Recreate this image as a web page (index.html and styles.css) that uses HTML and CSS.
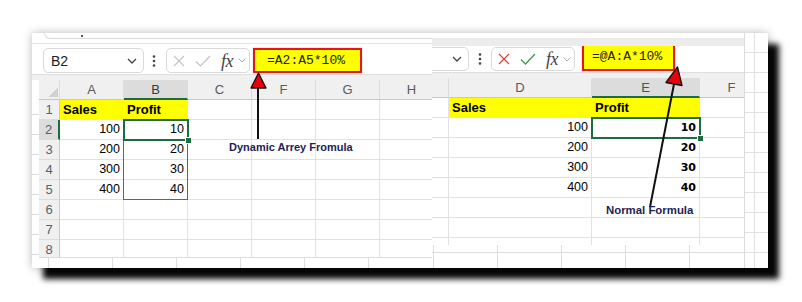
FILE: index.html
```html
<!DOCTYPE html>
<html>
<head>
    <meta charset="utf-8">
    <title>Dynamic Array vs Normal Formula</title>
    <link rel="stylesheet" href="styles.css">
</head>
<body>
    <div class="shot">
        <!-- left screenshot: spilled dynamic array -->
        <section class="pane pane-left">
            <div class="ribbon"><span class="ribbon-box"></span><span class="ribbon-dot"></span></div>
            <div class="fbar">
                <div class="namebox">
                    <span>B2</span>
                    <svg width="10" height="6" viewBox="0 0 10 6"><polyline points="1,1 5,5 9,1" fill="none" stroke="#444" stroke-width="1.3"/></svg>
                </div>
                <svg class="dots" width="4" height="12" viewBox="0 0 4 12"><circle cx="2" cy="1.5" r="1.3"/><circle cx="2" cy="6" r="1.3"/><circle cx="2" cy="10.5" r="1.3"/></svg>
                <div class="fxgroup">
                    <svg width="12" height="12" viewBox="0 0 12 12"><path d="M1 1L11 11M11 1L1 11" stroke="#c4c4c4" stroke-width="1.2"/></svg>
                    <svg width="16" height="12" viewBox="0 0 16 12"><path d="M1 6.5L5.5 11L15 1" fill="none" stroke="#c4c4c4" stroke-width="1.2"/></svg>
                    <span class="fx">fx</span>
                    <svg width="8" height="5" viewBox="0 0 8 5"><polyline points="0.5,0.5 4,4 7.5,0.5" fill="none" stroke="#aaa" stroke-width="1"/></svg>
                </div>
                <div class="formula formula-left">=A2:A5*10%</div>
            </div>
            <div class="body">
                <div class="gutter"></div>
                <div class="sheet sheet-left">
                    <div class="h corner"></div><div class="h">A</div><div class="h h-sel">B</div><div class="h">C</div><div class="h">F</div><div class="h">G</div><div class="h">H</div>

                    <div class="r">1</div><div class="c y b y-join">Sales</div><div class="c y b">Profit</div><div class="c"></div><div class="c"></div><div class="c"></div><div class="c"></div>
                    <div class="r r-sel">2</div><div class="c n">100</div><div class="c n">10</div><div class="c"></div><div class="c"></div><div class="c"></div><div class="c"></div>
                    <div class="r">3</div><div class="c n">200</div><div class="c n">20</div><div class="c"></div><div class="c"></div><div class="c"></div><div class="c"></div>
                    <div class="r">4</div><div class="c n">300</div><div class="c n">30</div><div class="c"></div><div class="c"></div><div class="c"></div><div class="c"></div>
                    <div class="r">5</div><div class="c n">400</div><div class="c n">40</div><div class="c"></div><div class="c"></div><div class="c"></div><div class="c"></div>
                    <div class="r">6</div><div class="c"></div><div class="c"></div><div class="c"></div><div class="c"></div><div class="c"></div><div class="c"></div>
                    <div class="r">7</div><div class="c"></div><div class="c"></div><div class="c"></div><div class="c"></div><div class="c"></div><div class="c"></div>
                    <div class="r r-last">8</div><div class="c"></div><div class="c"></div><div class="c"></div><div class="c"></div><div class="c"></div><div class="c"></div>

                    <div class="spill"></div>
                    <div class="active"><span class="handle"></span></div>
                </div>
            </div>
            <div class="tabs tabs-left"></div>
        </section>

        <!-- right screenshot: implicit intersection -->
        <section class="pane pane-right">
            <div class="ribbon ribbon-right"></div>
            <div class="fbar fbar-right">
                <div class="namebox namebox-cut">
                    <span></span>
                    <svg width="10" height="6" viewBox="0 0 10 6"><polyline points="1,1 5,5 9,1" fill="none" stroke="#444" stroke-width="1.3"/></svg>
                </div>
                <svg class="dots" width="4" height="12" viewBox="0 0 4 12"><circle cx="2" cy="1.5" r="1.3"/><circle cx="2" cy="6" r="1.3"/><circle cx="2" cy="10.5" r="1.3"/></svg>
                <div class="fxgroup">
                    <svg width="12" height="12" viewBox="0 0 12 12"><path d="M1 1L11 11M11 1L1 11" stroke="#e0463c" stroke-width="1.3"/></svg>
                    <svg width="16" height="12" viewBox="0 0 16 12"><path d="M1 6.5L5.5 11L15 1" fill="none" stroke="#3a9d4f" stroke-width="1.3"/></svg>
                    <span class="fx">fx</span>
                    <svg width="8" height="5" viewBox="0 0 8 5"><polyline points="0.5,0.5 4,4 7.5,0.5" fill="none" stroke="#aaa" stroke-width="1"/></svg>
                </div>
                <div class="formula formula-right">=@A:A*10%</div>
            </div>
            <div class="body body-right">
                <div class="sheet sheet-right">
                    <div class="h"></div><div class="h">D</div><div class="h h-sel">E</div><div class="h">F</div>

                    <div class="c"></div><div class="c y b y-join">Sales</div><div class="c y b">Profit</div><div class="c"></div>
                    <div class="c"></div><div class="c n">100</div><div class="c n nb">10</div><div class="c"></div>
                    <div class="c"></div><div class="c n">200</div><div class="c n nb">20</div><div class="c"></div>
                    <div class="c"></div><div class="c n">300</div><div class="c n nb">30</div><div class="c"></div>
                    <div class="c"></div><div class="c n">400</div><div class="c n nb">40</div><div class="c"></div>
                    <div class="c"></div><div class="c"></div><div class="c"></div><div class="c"></div>
                    <div class="c"></div><div class="c"></div><div class="c"></div><div class="c"></div>
                    <div class="c c-cut"></div><div class="c c-cut"></div><div class="c c-cut"></div><div class="c c-cut"></div>

                    <div class="active"><span class="handle"></span></div>
                </div>
            </div>
            <div class="tabs tabs-right"></div>
        </section>

        <div class="edge"></div>
    </div>

    <!-- annotation arrows -->
    <svg class="arrows" width="802" height="302" viewBox="0 0 802 302">
        <line x1="258" y1="87" x2="258" y2="139" stroke="#111" stroke-width="2"/>
        <polygon points="258.5,73 251,88 266,88" fill="#e8000b" stroke="#111" stroke-width="1.3" stroke-linejoin="round"/>
        <line x1="650" y1="207" x2="674" y2="84" stroke="#111" stroke-width="2"/>
        <polygon points="677.5,67 666,82.5 682,85.5" fill="#e8000b" stroke="#111" stroke-width="1.3" stroke-linejoin="round"/>
    </svg>
    <div class="note note-left">Dynamic Arrey Fromula</div>
    <div class="note note-right">Normal Formula</div>
</body>
</html>
```

FILE: styles.css
```css
* {
    box-sizing: border-box;
}

body {
    margin: 0;
    width: 802px;
    height: 302px;
    position: relative;
    overflow: hidden;
    background: #fff;
    font-family: "Liberation Sans", Arial, sans-serif;
    color: #000;
}

.shot {
    display: flex;
    width: 736px;
    height: 235px;
    margin: 33px 0 0 32px;
    background: #fff;
    overflow: hidden;
    box-shadow: 11px 11px 6px rgba(0, 0, 0, 0.98), 0 0 9px rgba(0, 0, 0, 0.28);
}

.pane {
    flex: none;
    display: flex;
    flex-direction: column;
    overflow: hidden;
}

.pane-left {
    width: 400px;
}

.pane-right {
    width: 312px;
}

/* ribbon remnants at the top */
.ribbon {
    height: 11px;
    border-bottom: 1px solid #e4e4e4;
    position: relative;
    flex: none;
}

.ribbon-box {
    display: block;
    margin-left: 12px;
    width: 400px;
    height: 6px;
    border: 1px solid #d8d8d8;
    border-top: none;
    border-radius: 0 0 6px 6px;
}

.ribbon-dot {
    position: absolute;
    left: 49px;
    top: 2px;
    width: 2px;
    height: 2px;
    background: #555;
}

.ribbon-right {
    height: 13px;
    border-bottom: none;
    background:
        linear-gradient(#fff 0 5px, #ececec 5px 13px),
        #fff;
}

/* formula bar */
.fbar {
    height: 31px;
    flex: none;
    display: flex;
    align-items: flex-start;
    padding: 4px 0 0 11px;
    background: #fff;
    border-bottom: 1px solid #dedede;
}

.fbar-right {
    height: 27px;
    padding: 1px 0 0 0;
    border-bottom: 1px solid #dedede;
}

.namebox {
    flex: none;
    width: 101px;
    height: 25px;
    display: flex;
    align-items: center;
    justify-content: space-between;
    padding: 0 6px 0 7px;
    border: 1px solid #d9d9d9;
    border-radius: 5px;
    background: #fff;
    font-size: 14px;
    color: #222;
}

.namebox-cut {
    margin-left: -64px;
    height: 24px;
}

.dots {
    flex: none;
    margin: 7px 0 0 8px;
    fill: #444;
}

.fbar-right .dots {
    margin: 6px 0 0 9px;
}

.fxgroup {
    flex: none;
    width: 84px;
    height: 25px;
    margin-left: 10px;
    display: flex;
    align-items: center;
    padding-left: 6px;
    border: 1px solid #d9d9d9;
    border-radius: 5px;
    background: #fff;
}

.fbar-right .fxgroup {
    margin-left: 9px;
    height: 24px;
}

.fxgroup svg:nth-child(2) {
    margin-left: 10px;
}

.fx {
    margin-left: 10px;
    font-family: "Liberation Serif", "Times New Roman", serif;
    font-style: italic;
    font-size: 18px;
    line-height: 18px;
    color: #444;
    letter-spacing: -0.5px;
}

.fxgroup svg:last-child {
    margin-left: 5px;
}

.formula {
    flex: none;
    height: 25px;
    margin-left: 3px;
    background: #ffff00;
    border: 2px solid #e8141b;
    font-family: "Liberation Mono", "Courier New", monospace;
    font-size: 13px;
    line-height: 21px;
    color: #222;
    padding-left: 12px;
    box-shadow: 0 0 1px rgba(0, 0, 0, 0.4);
}

.formula-left {
    width: 109px;
}

.formula-right {
    width: 93px;
    height: 29px;
    margin: -5px 0 0 7px;
    line-height: 25px;
    padding-left: 8px;
}

/* sheet */
.body {
    flex: none;
    display: flex;
    height: 183px;
    border-top: 5px solid #f0f0f0;
    overflow: hidden;
}

.body-right {
    height: 172px;
}

.gutter {
    flex: none;
    width: 7px;
    background:
        repeating-linear-gradient(to bottom, transparent 0 14px, #dcdcdc 14px 15px, transparent 15px 20px);
    border-top: 20px solid #fff;
}

.sheet {
    position: relative;
    display: grid;
    flex: none;
}

.sheet-left {
    grid-template-columns: 21px repeat(6, 64px);
    grid-template-rows: repeat(8, 20px) 18px;
}

.sheet-right {
    grid-template-columns: 17px 143px 108px 64px;
    grid-template-rows: repeat(8, 20px) 7px;
}

.h {
    background: #f0f0f0;
    border-right: 1px solid #dcdcdc;
    border-bottom: 1px solid #c8c8c8;
    font-size: 13px;
    line-height: 19px;
    text-align: center;
    color: #5a5a5a;
}

.h-sel {
    background: #dcdcdc;
    border-bottom: 2px solid #1d6b40;
    color: #1d6b40;
}

.sheet-left .h-sel {
    color: #3a3a3a;
}

.corner {
    background:
        linear-gradient(135deg, transparent 58%, #d0d0d0 58%) 8px 6px / 11px 11px no-repeat,
        #f0f0f0;
}

.r {
    background: #f0f0f0;
    border-right: 1px solid #c8c8c8;
    border-bottom: 1px solid #dcdcdc;
    font-size: 13px;
    line-height: 19px;
    text-align: center;
    color: #556270;
}

.r-sel {
    background: #dcdcdc;
    border-right: 2px solid #1d6b40;
}

.c {
    border-right: 1px solid #e1e1e1;
    border-bottom: 1px solid #e1e1e1;
    font-size: 12.5px;
    line-height: 19px;
    padding: 0 3px;
    white-space: nowrap;
    overflow: hidden;
}

.c-cut {
    border-bottom: none;
}

.y {
    background: #ffff00;
}

.y-join {
    border-right-color: #ffff00;
}

.b {
    font-weight: bold;
    font-size: 13px;
    padding-left: 3px;
}

.n {
    text-align: right;
}

.nb {
    font-family: "DejaVu Sans", sans-serif;
    font-weight: bold;
    font-size: 11px;
}

/* selection overlays, placed on grid areas */
.spill {
    position: absolute;
    grid-column: 3 / 4;
    grid-row: 3 / 7;
    top: -1px;
    left: -1px;
    right: 0;
    bottom: 0;
    border: 1px solid #1f6fe5;
}

.active {
    position: absolute;
    grid-column: 3 / 4;
    grid-row: 3 / 4;
    top: -1px;
    left: -1px;
    right: -1px;
    bottom: -1px;
    border: 2px solid #1d6b40;
}

.handle {
    position: absolute;
    right: -5px;
    bottom: -5px;
    width: 7px;
    height: 7px;
    background: #1d6b40;
    border: 1px solid #fff;
}

/* bottom strip */
.tabs {
    flex: 1;
    background: repeating-linear-gradient(to right, transparent 0 16px, #dcdcdc 16px 17px, transparent 17px 64px);
}

.tabs-right {
    background:
        linear-gradient(to bottom, transparent 0 7px, #dcdcdc 7px 8px, transparent 8px),
        repeating-linear-gradient(to right, #dcdcdc 0 1px, transparent 1px 64px) 1px 0;
}

.edge {
    flex: none;
    width: 24px;
    border-left: 1px solid #dcdcdc;
    background:
        linear-gradient(to right, transparent 0 9px, #e1e1e1 9px 10px, transparent 10px),
        repeating-linear-gradient(to bottom, transparent 0 19px, #e1e1e1 19px 20px);
}

/* annotations */
.arrows {
    position: absolute;
    left: 0;
    top: 0;
    pointer-events: none;
}

.note {
    position: absolute;
    font-size: 11px;
    font-weight: bold;
    color: #1e1e55;
    white-space: nowrap;
    line-height: 13px;
}

.note-left {
    left: 229px;
    top: 141px;
}

.note-right {
    left: 606px;
    top: 204px;
    font-size: 11.4px;
}
```
